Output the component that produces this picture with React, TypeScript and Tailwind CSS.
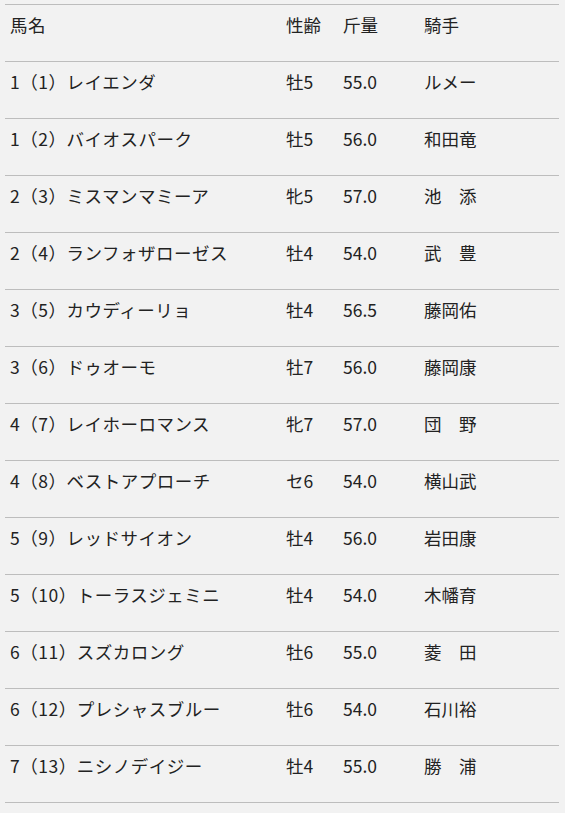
import React from "react";

const rows = [
  { name: "1（1）レイエンダ", sexAge: "牡5", weight: "55.0", jockey: "ルメー" },
  { name: "1（2）バイオスパーク", sexAge: "牡5", weight: "56.0", jockey: "和田竜" },
  { name: "2（3）ミスマンマミーア", sexAge: "牝5", weight: "57.0", jockey: "池　添" },
  { name: "2（4）ランフォザローゼス", sexAge: "牡4", weight: "54.0", jockey: "武　豊" },
  { name: "3（5）カウディーリョ", sexAge: "牡4", weight: "56.5", jockey: "藤岡佑" },
  { name: "3（6）ドゥオーモ", sexAge: "牡7", weight: "56.0", jockey: "藤岡康" },
  { name: "4（7）レイホーロマンス", sexAge: "牝7", weight: "57.0", jockey: "団　野" },
  { name: "4（8）ベストアプローチ", sexAge: "セ6", weight: "54.0", jockey: "横山武" },
  { name: "5（9）レッドサイオン", sexAge: "牡4", weight: "56.0", jockey: "岩田康" },
  { name: "5（10）トーラスジェミニ", sexAge: "牡4", weight: "54.0", jockey: "木幡育" },
  { name: "6（11）スズカロング", sexAge: "牡6", weight: "55.0", jockey: "菱　田" },
  { name: "6（12）プレシャスブルー", sexAge: "牡6", weight: "54.0", jockey: "石川裕" },
  { name: "7（13）ニシノデイジー", sexAge: "牡4", weight: "55.0", jockey: "勝　浦" },
];

function Row({ cells }: { cells: string[] }) {
  return (
    <div className="grid grid-cols-[276px_57px_81px_1fr] h-[57px] border-t border-[#bdbdbd] pl-[5px] pt-[8px] leading-[24px]">
      {cells.map((c, i) => (
        <div key={i} className={i === 0 ? "whitespace-nowrap tracking-[0.5px]" : "whitespace-nowrap"}>
          {c}
        </div>
      ))}
    </div>
  );
}

export default function App() {
  return (
    <div
      className="min-h-[813px] bg-[#f2f2f2] pt-[4px] text-[17.5px] text-[#222]"
      style={{ fontFamily: '"Noto Sans CJK JP", "Noto Sans", sans-serif' }}
    >
      <div className="mx-[5px] w-[554px] border-b border-[#bdbdbd]">
        <Row cells={["馬名", "性齢", "斤量", "騎手"]} />
        {rows.map((r) => (
          <Row key={r.name} cells={[r.name, r.sexAge, r.weight, r.jockey]} />
        ))}
      </div>
    </div>
  );
}
